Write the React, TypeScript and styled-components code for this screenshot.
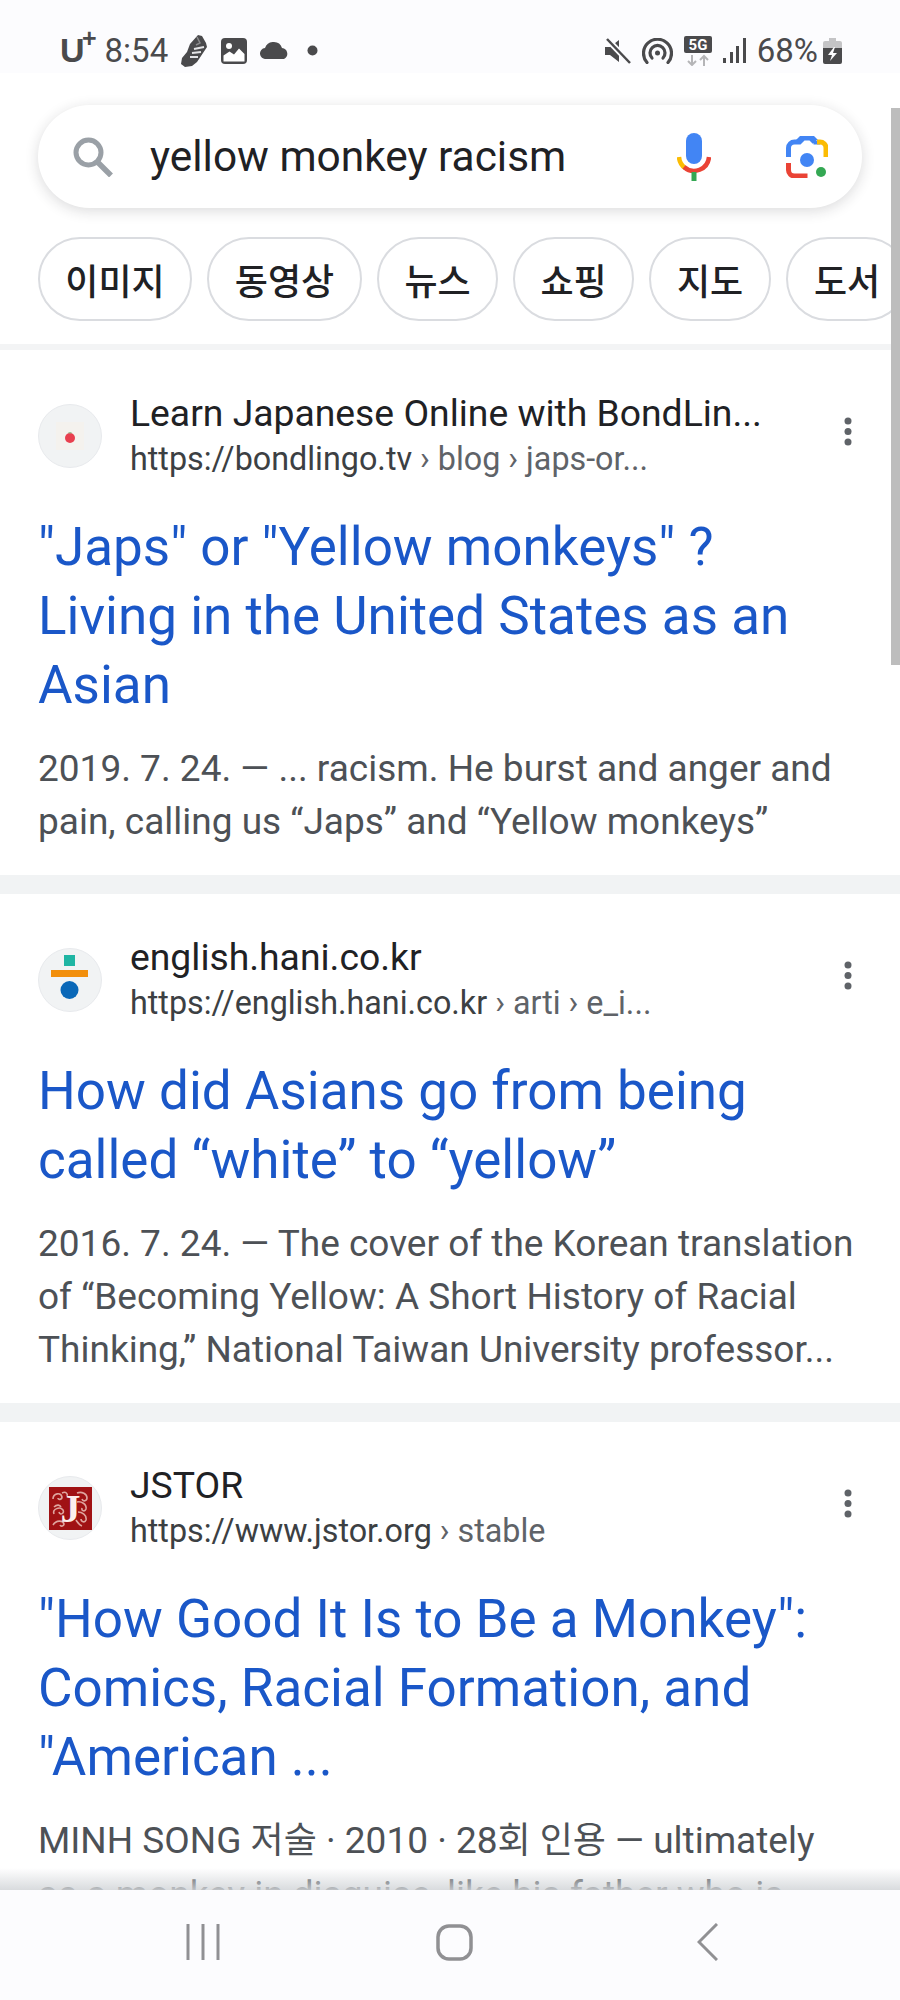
import * as React from 'react';
import styled, { createGlobalStyle } from 'styled-components';

const GlobalStyle = createGlobalStyle`
    html, body {
        margin: 0;
        padding: 0;
        background: #fff;
    }
    body {
        font-family: Roboto, "Noto Sans CJK KR", sans-serif;
    }
`;

const Phone = styled.div`
    position: relative;
    width: 900px;
    height: 2000px;
    display: flex;
    flex-direction: column;
    overflow: hidden;
    background: #fff;
`;

const StatusBar = styled.div`
    height: 73px;
    flex: none;
    box-sizing: border-box;
    padding: 28px 58px 0 60px;
    display: flex;
    align-items: center;
    justify-content: space-between;
    background: #fcfcfe;
    color: #4a4a4c;
`;
const StatusGroup = styled.div`
    display: flex;
    align-items: center;
    gap: ${(p: { $gap: number }) => p.$gap}px;
`;
const Carrier = styled.span`
    font: 700 34px/45px "Liberation Sans", sans-serif;
    position: relative;
    padding-right: 11px;
    margin-right: -4px;
    sup {
        position: absolute;
        right: -1px;
        top: -8px;
        font-size: 25px;
        line-height: 36px;
    }
`;
const StatusText = styled.span`
    font: 400 33px/45px Roboto, sans-serif;
`;
const PercentText = styled(StatusText)`
    margin-right: -6px;
`;
const NotifyDot = styled.svg`
    margin-left: 4px;
`;

const SearchArea = styled.div`
    flex: none;
    height: 277px;
    box-sizing: border-box;
    padding-top: 32px;
    border-bottom: 6px solid #f3f4f5;
    overflow: hidden;
`;
const SearchBox = styled.div`
    width: 824px;
    height: 103px;
    margin-left: 38px;
    box-sizing: border-box;
    padding: 0 34px 0 35px;
    display: flex;
    align-items: center;
    border-radius: 52px;
    background: #fff;
    box-shadow: 0 3px 14px rgba(32, 33, 36, 0.16);
`;
const Query = styled.div`
    flex: 1;
    margin-left: 37px;
    font-size: 42.4px;
    color: #202124;
`;
const LensIcon = styled.svg`
    margin-left: 75px;
`;
const Chips = styled.div`
    display: flex;
    gap: 15px;
    margin-top: 29px;
    padding-left: 38px;
    width: 1000px;
`;
const Chip = styled.div`
    flex: none;
    width: ${(p: { $w: number }) => p.$w}px;
    height: 84px;
    box-sizing: border-box;
    display: flex;
    align-items: center;
    justify-content: center;
    border: 2px solid #dadce0;
    border-radius: 42px;
    font: 500 36px "Noto Sans CJK KR", sans-serif;
    color: #202124;
`;

const Results = styled.div`
    flex: 1;
    min-height: 0;
    overflow: hidden;
`;
const Card = styled.div`
    box-sizing: border-box;
    padding: 40px 38px 27px;
    background: #fff;
    & + & {
        border-top: 19px solid #f1f3f4;
    }
`;
const CardHeader = styled.div`
    display: flex;
    align-items: center;
`;
const Favicon = styled.div`
    flex: none;
    width: 64px;
    height: 64px;
    box-sizing: border-box;
    margin-right: 28px;
    display: flex;
    align-items: center;
    justify-content: center;
    border-radius: 50%;
    background: #f1f3f4;
    border: 1px solid #e8eaed;
`;
const Source = styled.div`
    flex: 1;
    min-width: 0;
`;
const SiteName = styled.div`
    font-size: 37.3px;
    line-height: 46px;
    color: #202124;
`;
const SiteUrl = styled.div`
    font-size: 32.3px;
    line-height: 46px;
    color: #3c4043;
    span {
        color: #5f6368;
    }
`;
const MoreButton = styled.svg`
    flex: none;
    margin: -10px 10px 0 0;
`;
const Title = styled.div`
    margin-top: 31px;
    font-size: 53px;
    line-height: 69px;
    color: #1a57c8;
`;
const Snippet = styled.div`
    margin-top: 22px;
    font-size: 37px;
    line-height: 53px;
    color: #4d5156;
`;
const Hangul = styled.span`
    font-size: 36px;
`;

const NavShade = styled.div`
    position: absolute;
    left: 0;
    right: 0;
    bottom: 110px;
    height: 22px;
    background: linear-gradient(to bottom, rgba(255, 255, 255, 0), rgba(210, 213, 216, 0.85));
`;
const NavBar = styled.div`
    flex: none;
    height: 110px;
    box-sizing: border-box;
    padding: 0 0 6px 186px;
    display: flex;
    align-items: center;
    gap: 216px;
    background: #fcfcfe;
`;
const HomeIcon = styled.svg`
    margin-right: 8px;
`;
const ScrollThumb = styled.div`
    position: absolute;
    right: 0;
    top: 108px;
    width: 9px;
    height: 557px;
    background: #bdbdbd;
`;

const ShoeIcon = () => (
    <svg width="27" height="33" viewBox="0 0 27 33">
        <path d="M17 1l4 1 4 7 1 4-4 6-6 9-5 4-7 1-4-3 1-6 5-6 3-8z" fill="#4a4a4c" />
        <path d="M13 15l10-2M11 19l9-1M9 23l8 0" stroke="#e4e4e6" strokeWidth="2" fill="none" />
        <path d="M16 3l3 6-4 2" stroke="#8a8a8c" strokeWidth="1.5" fill="none" />
    </svg>
);

const ImageIcon = () => (
    <svg width="26" height="26" viewBox="0 0 26 26">
        <rect width="26" height="26" rx="4" fill="#4a4a4c" />
        <circle cx="8" cy="8" r="3" fill="#fff" />
        <path d="M2.5 23.5v-6l6-4 4.500 3 5-6 5.500 5.500v7.500z" fill="#fff" />
    </svg>
);

const CloudIcon = () => (
    <svg width="30" height="17" viewBox="0 0 30 17">
        <path d="M6 17a5.500 5.500 0 0 1-1-11A9 9 0 0 1 14 0a8.500 8.500 0 0 1 8 6 5.800 5.800 0 0 1 2 11z" fill="#4a4a4c" />
    </svg>
);

const Dot = () => (
    <NotifyDot width="11" height="11" viewBox="0 0 11 11">
        <circle cx="5.500" cy="5.500" r="5" fill="#4a4a4c" />
    </NotifyDot>
);

const MuteIcon = () => (
    <svg width="26" height="26" viewBox="0 0 26 26">
        <path d="M0 9h5l9-7v22l-9-7H0z" fill="#4a4a4c" />
        <path d="M2 1l23 24" stroke="#fcfcfe" strokeWidth="6" />
        <path d="M2 1l23 24" stroke="#4a4a4c" strokeWidth="2.500" />
    </svg>
);

const HotspotIcon = () => (
    <svg width="31" height="26" viewBox="0 0 31 26" fill="none" stroke="#4a4a4c" strokeWidth="3.200" strokeLinecap="round">
        <path d="M5 24.500a14 14 0 1 1 21 0" />
        <path d="M10 20a7.500 7.500 0 1 1 11 0" />
        <circle cx="15.500" cy="15" r="2.500" fill="#4a4a4c" stroke="none" />
    </svg>
);

const FiveGIcon = () => (
    <svg width="28" height="30" viewBox="0 0 28 30">
        <rect width="28" height="17" rx="2" fill="#4a4a4c" />
        <text x="14" y="14" textAnchor="middle" fontFamily="Roboto, sans-serif" fontWeight="700" fontSize="15" fill="#fff">5G</text>
        <path d="M8 19v10M4 25l4 4 4-4" stroke="#b5b5b7" strokeWidth="2" fill="none" />
        <path d="M20 30V20M16 24l4-4 4 4" stroke="#b5b5b7" strokeWidth="2" fill="none" />
    </svg>
);

const SignalIcon = () => (
    <svg width="23" height="25" viewBox="0 0 23 25">
        <rect x="0" y="20" width="3" height="5" fill="#4a4a4c" />
        <rect x="7" y="14" width="3" height="11" fill="#4a4a4c" />
        <rect x="13" y="8" width="3" height="17" fill="#4a4a4c" />
        <rect x="20" y="0" width="3" height="25" fill="#4a4a4c" />
    </svg>
);

const BatteryIcon = () => (
    <svg width="19" height="26" viewBox="0 0 19 26">
        <path d="M6 0h7v3h4a2 2 0 0 1 2 2v5H0V5a2 2 0 0 1 2-2h4z" fill="#c4c4c6" />
        <path d="M0 10h19v14a2 2 0 0 1-2 2H2a2 2 0 0 1-2-2z" fill="#4a4a4c" />
        <path d="M11 9l-6 8h4l-2 6 7-8h-4l2-6z" fill="#fcfcfe" />
    </svg>
);

const SearchIcon = () => (
    <svg width="40" height="40" viewBox="0 0 40 40" fill="none" stroke="#9aa0a6">
        <circle cx="15.500" cy="15.500" r="12.500" strokeWidth="5" />
        <path d="M24.500 25L38 38.500" strokeWidth="5.500" />
    </svg>
);

const MicIcon = () => (
    <svg width="34" height="48" viewBox="0 0 34 48" fill="none">
        <rect x="9" y="0" width="16" height="31" rx="8" fill="#4285f4" />
        <path d="M2 24a15 15 0 0 0 6 11" stroke="#fbbc04" strokeWidth="4.500" />
        <path d="M7 34a15 15 0 0 0 25-10" stroke="#ea4335" strokeWidth="4.500" />
        <rect x="14.500" y="39" width="5" height="9" fill="#34a853" />
    </svg>
);

const LensGlyph = () => (
    <>
        <path d="M2.500 21v-9a6 6 0 0 1 6-6h5l4-4h7l4 4h-1" stroke="#4285f4" strokeWidth="5" fill="none" />
        <path d="M10 4h22l-4-4H14z" fill="#4285f4" />
        <path d="M31 6h3a6 6 0 0 1 6 6v9" stroke="#fbbc04" strokeWidth="5" fill="none" />
        <path d="M2.500 27v7a6 6 0 0 0 6 6h13" stroke="#ea4335" strokeWidth="5" fill="none" />
        <circle cx="21" cy="24" r="7" fill="#4285f4" />
        <circle cx="35" cy="36" r="5" fill="#34a853" />
    </>
);

const MoreIcon = () => (
    <MoreButton width="8" height="29" viewBox="0 0 8 29">
        <circle cx="4" cy="4" r="3.500" fill="#5f6368" />
        <circle cx="4" cy="14.500" r="3.500" fill="#5f6368" />
        <circle cx="4" cy="25" r="3.500" fill="#5f6368" />
    </MoreButton>
);

const BondlingoLogo = () => (
    <svg width="36" height="36" viewBox="0 0 36 36">
        <rect x="4" y="4" width="28" height="28" fill="#f4f2ee" />
        <circle cx="18" cy="20" r="5" fill="#e8404f" />
        <path d="M16.500 14.800h3" stroke="#8fb080" strokeWidth="1.200" />
    </svg>
);

const HaniLogo = () => (
    <svg width="38" height="50" viewBox="0 0 38 50">
        <rect x="13" y="0" width="11" height="11" fill="#1fb5a3" />
        <rect x="0" y="15" width="37" height="7" fill="#f28f0c" />
        <circle cx="18.500" cy="35" r="9" fill="#0a68b8" />
    </svg>
);

const JstorLogo = () => (
    <svg width="43" height="43" viewBox="0 0 43 43">
        <rect width="43" height="43" fill="#a01214" />
        <g fill="none" stroke="#dfa59f" strokeWidth="1.600">
            <path d="M4 12c0-6 8-7 9-2 0 3-4 3-4 1M13 6c4-2 6 1 5 3" />
            <path d="M5 27c-2-5 6-8 9-4 2 3-3 6-4 2M5 20c3-3 6-2 7 0" />
            <path d="M4 38c3-5 10-5 11-1 0 2-3 3-4 1" />
            <path d="M28 6c5-2 10 1 10 5 0 3-4 4-5 1M28 15c4-1 10 2 9 7-1 3-5 2-4-1" />
            <path d="M29 25c4 0 9 3 8 8-1 3-5 2-5-1M27 33c2 3 3 5 6 6" />
        </g>
        <text x="21.500" y="35" textAnchor="middle" fontFamily="'Liberation Serif', serif" fontWeight="700" fontSize="40" fill="#fbeeec">J</text>
    </svg>
);

const chips = [
    { label: '이미지', w: 154 },
    { label: '동영상', w: 155 },
    { label: '뉴스', w: 121 },
    { label: '쇼핑', w: 121 },
    { label: '지도', w: 122 },
    { label: '도서', w: 122 },
];

const App = () => (
    <>
        <GlobalStyle />
        <Phone>
            <StatusBar>
                <StatusGroup $gap={13}>
                    <Carrier>U<sup>+</sup></Carrier>
                    <StatusText>8:54</StatusText>
                    <ShoeIcon />
                    <ImageIcon />
                    <CloudIcon />
                    <Dot />
                </StatusGroup>
                <StatusGroup $gap={11}>
                    <MuteIcon />
                    <HotspotIcon />
                    <FiveGIcon />
                    <SignalIcon />
                    <PercentText>68%</PercentText>
                    <BatteryIcon />
                </StatusGroup>
            </StatusBar>
            <SearchArea>
                <SearchBox>
                    <SearchIcon />
                    <Query>yellow monkey racism</Query>
                    <MicIcon />
                    <LensIcon width="42" height="42" viewBox="0 0 42 42">
                        <LensGlyph />
                    </LensIcon>
                </SearchBox>
                <Chips>
                    {chips.map((c) => (
                        <Chip key={c.label} $w={c.w}>{c.label}</Chip>
                    ))}
                </Chips>
            </SearchArea>
            <Results>
                <Card>
                    <CardHeader>
                        <Favicon><BondlingoLogo /></Favicon>
                        <Source>
                            <SiteName>Learn Japanese Online with BondLin...</SiteName>
                            <SiteUrl>https://bondlingo.tv <span>› blog › japs-or...</span></SiteUrl>
                        </Source>
                        <MoreIcon />
                    </CardHeader>
                    <Title>"Japs" or "Yellow monkeys" ?<br />Living in the United States as an<br />Asian</Title>
                    <Snippet>2019. 7. 24. — ... racism. He burst and anger and<br />pain, calling us “Japs” and “Yellow monkeys”</Snippet>
                </Card>
                <Card>
                    <CardHeader>
                        <Favicon><HaniLogo /></Favicon>
                        <Source>
                            <SiteName>english.hani.co.kr</SiteName>
                            <SiteUrl>https://english.hani.co.kr <span>› arti › e_i...</span></SiteUrl>
                        </Source>
                        <MoreIcon />
                    </CardHeader>
                    <Title>How did Asians go from being<br />called “white” to “yellow”</Title>
                    <Snippet>2016. 7. 24. — The cover of the Korean translation<br />of “Becoming Yellow: A Short History of Racial<br />Thinking,” National Taiwan University professor...</Snippet>
                </Card>
                <Card>
                    <CardHeader>
                        <Favicon><JstorLogo /></Favicon>
                        <Source>
                            <SiteName>JSTOR</SiteName>
                            <SiteUrl>https://www.jstor.org <span>› stable</span></SiteUrl>
                        </Source>
                        <MoreIcon />
                    </CardHeader>
                    <Title>"How Good It Is to Be a Monkey":<br />Comics, Racial Formation, and<br />"American ...</Title>
                    <Snippet>MINH SONG <Hangul>저술</Hangul> · 2010 · 28<Hangul>회 인용</Hangul> — ultimately<br />as a monkey in disguise, like his father who is</Snippet>
                </Card>
            </Results>
            <NavShade />
            <NavBar>
                <svg width="34" height="36" viewBox="0 0 34 36" fill="none" stroke="#909093" strokeWidth="3">
                    <path d="M2 0v36M17 0v36M32 0v36" />
                </svg>
                <HomeIcon width="37" height="37" viewBox="0 0 37 37" fill="none" stroke="#909093" strokeWidth="3.500">
                    <rect x="2" y="2" width="33" height="33" rx="11" />
                </HomeIcon>
                <svg width="21" height="38" viewBox="0 0 21 38" fill="none" stroke="#909093" strokeWidth="3">
                    <path d="M20 1L2 19l18 18" />
                </svg>
            </NavBar>
            <ScrollThumb />
        </Phone>
    </>
);

export default App;
